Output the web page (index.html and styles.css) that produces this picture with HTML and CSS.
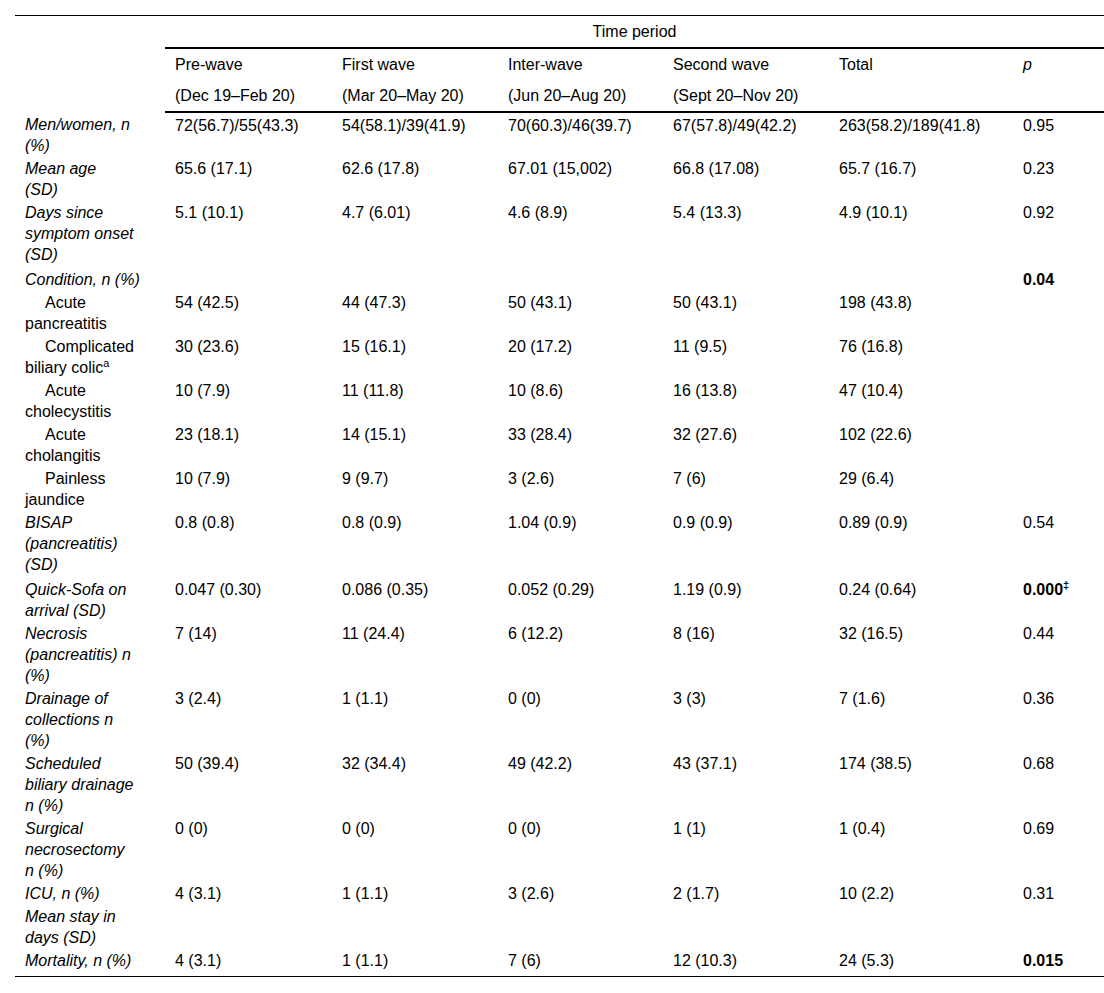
FILE: index.html
```html
<!DOCTYPE html>
<html lang="en">
<head>
<meta charset="utf-8">
<title>Time period table</title>
<link rel="stylesheet" href="styles.css">
</head>
<body>
<table class="data">
  <colgroup>
    <col class="c-label">
    <col class="c-pre">
    <col class="c-first">
    <col class="c-inter">
    <col class="c-second">
    <col class="c-total">
    <col class="c-p">
  </colgroup>
  <thead>
    <tr class="h-top">
      <th rowspan="3"></th>
      <th colspan="6" class="span">Time period</th>
    </tr>
    <tr class="h-mid">
      <th>Pre-wave</th>
      <th>First wave</th>
      <th>Inter-wave</th>
      <th>Second wave</th>
      <th>Total</th>
      <th><i>p</i></th>
    </tr>
    <tr class="h-bot">
      <th>(Dec 19–Feb 20)</th>
      <th>(Mar 20–May 20)</th>
      <th>(Jun 20–Aug 20)</th>
      <th>(Sept 20–Nov 20)</th>
      <th></th>
      <th></th>
    </tr>
  </thead>
  <tbody>
    <tr>
      <td class="lbl">Men/women, n<br>(%)</td>
      <td>72(56.7)/55(43.3)</td><td>54(58.1)/39(41.9)</td><td>70(60.3)/46(39.7)</td><td>67(57.8)/49(42.2)</td><td>263(58.2)/189(41.8)</td><td>0.95</td>
    </tr>
    <tr>
      <td class="lbl">Mean age<br>(SD)</td>
      <td>65.6 (17.1)</td><td>62.6 (17.8)</td><td>67.01 (15,002)</td><td>66.8 (17.08)</td><td>65.7 (16.7)</td><td>0.23</td>
    </tr>
    <tr class="gap">
      <td class="lbl">Days since<br>symptom onset<br>(SD)</td>
      <td>5.1 (10.1)</td><td>4.7 (6.01)</td><td>4.6 (8.9)</td><td>5.4 (13.3)</td><td>4.9 (10.1)</td><td>0.92</td>
    </tr>
    <tr>
      <td class="lbl">Condition, n (%)</td>
      <td></td><td></td><td></td><td></td><td></td><td><b>0.04</b></td>
    </tr>
    <tr>
      <td class="sub">Acute<br>pancreatitis</td>
      <td>54 (42.5)</td><td>44 (47.3)</td><td>50 (43.1)</td><td>50 (43.1)</td><td>198 (43.8)</td><td></td>
    </tr>
    <tr>
      <td class="sub">Complicated<br>biliary colic<sup>a</sup></td>
      <td>30 (23.6)</td><td>15 (16.1)</td><td>20 (17.2)</td><td>11 (9.5)</td><td>76 (16.8)</td><td></td>
    </tr>
    <tr>
      <td class="sub">Acute<br>cholecystitis</td>
      <td>10 (7.9)</td><td>11 (11.8)</td><td>10 (8.6)</td><td>16 (13.8)</td><td>47 (10.4)</td><td></td>
    </tr>
    <tr>
      <td class="sub">Acute<br>cholangitis</td>
      <td>23 (18.1)</td><td>14 (15.1)</td><td>33 (28.4)</td><td>32 (27.6)</td><td>102 (22.6)</td><td></td>
    </tr>
    <tr>
      <td class="sub">Painless<br>jaundice</td>
      <td>10 (7.9)</td><td>9 (9.7)</td><td>3 (2.6)</td><td>7 (6)</td><td>29 (6.4)</td><td></td>
    </tr>
    <tr class="gap">
      <td class="lbl">BISAP<br>(pancreatitis)<br>(SD)</td>
      <td>0.8 (0.8)</td><td>0.8 (0.9)</td><td>1.04 (0.9)</td><td>0.9 (0.9)</td><td>0.89 (0.9)</td><td>0.54</td>
    </tr>
    <tr>
      <td class="lbl">Quick-Sofa on<br>arrival (SD)</td>
      <td>0.047 (0.30)</td><td>0.086 (0.35)</td><td>0.052 (0.29)</td><td>1.19 (0.9)</td><td>0.24 (0.64)</td><td><b>0.000<sup>‡</sup></b></td>
    </tr>
    <tr>
      <td class="lbl">Necrosis<br>(pancreatitis) n<br>(%)</td>
      <td>7 (14)</td><td>11 (24.4)</td><td>6 (12.2)</td><td>8 (16)</td><td>32 (16.5)</td><td>0.44</td>
    </tr>
    <tr>
      <td class="lbl">Drainage of<br>collections n<br>(%)</td>
      <td>3 (2.4)</td><td>1 (1.1)</td><td>0 (0)</td><td>3 (3)</td><td>7 (1.6)</td><td>0.36</td>
    </tr>
    <tr>
      <td class="lbl">Scheduled<br>biliary drainage<br>n (%)</td>
      <td>50 (39.4)</td><td>32 (34.4)</td><td>49 (42.2)</td><td>43 (37.1)</td><td>174 (38.5)</td><td>0.68</td>
    </tr>
    <tr>
      <td class="lbl">Surgical<br>necrosectomy<br>n (%)</td>
      <td>0 (0)</td><td>0 (0)</td><td>0 (0)</td><td>1 (1)</td><td>1 (0.4)</td><td>0.69</td>
    </tr>
    <tr>
      <td class="lbl">ICU, n (%)</td>
      <td>4 (3.1)</td><td>1 (1.1)</td><td>3 (2.6)</td><td>2 (1.7)</td><td>10 (2.2)</td><td>0.31</td>
    </tr>
    <tr>
      <td class="lbl">Mean stay in<br>days (SD)</td>
      <td></td><td></td><td></td><td></td><td></td><td></td>
    </tr>
    <tr class="last">
      <td class="lbl">Mortality, n (%)</td>
      <td>4 (3.1)</td><td>1 (1.1)</td><td>7 (6)</td><td>12 (10.3)</td><td>24 (5.3)</td><td><b>0.015</b></td>
    </tr>
  </tbody>
</table>
</body>
</html>
```
FILE: styles.css
```css
html, body {
  margin: 0;
  padding: 0;
  background: #ffffff;
}

body {
  font-family: "Liberation Sans", Arial, Helvetica, sans-serif;
  font-size: 16px;
  line-height: 21px;
  color: #000000;
}

.data {
  margin: 15px 0 0 15px;
  width: 1089px;
  table-layout: fixed;
  border-collapse: collapse;
  border-top: 1px solid #000000;
  border-bottom: 1px solid #000000;
}

.c-label { width: 150px; }
.c-pre { width: 167px; }
.c-first { width: 166px; }
.c-inter { width: 165px; }
.c-second { width: 166px; }
.c-total { width: 184px; }
.c-p { width: 91px; }

.data th {
  font-weight: normal;
  text-align: left;
  vertical-align: top;
  padding: 5px 10px;
  white-space: nowrap;
}

.data th.span {
  text-align: center;
  border-bottom: 2px solid #000000;
}

.data .h-bot th {
  border-bottom: 2px solid #000000;
}

.data td {
  vertical-align: top;
  padding: 2px 10px 0 10px;
  white-space: nowrap;
}

.data td.lbl {
  font-style: italic;
}

.data td.sub {
  text-indent: 20px;
}

.data tr.gap td {
  padding-bottom: 2px;
}

.data tr.last td {
  padding-bottom: 5px;
}

.data sup {
  font-size: 11px;
  line-height: 0;
  vertical-align: 6px;
}

.data b {
  font-weight: bold;
}
```
